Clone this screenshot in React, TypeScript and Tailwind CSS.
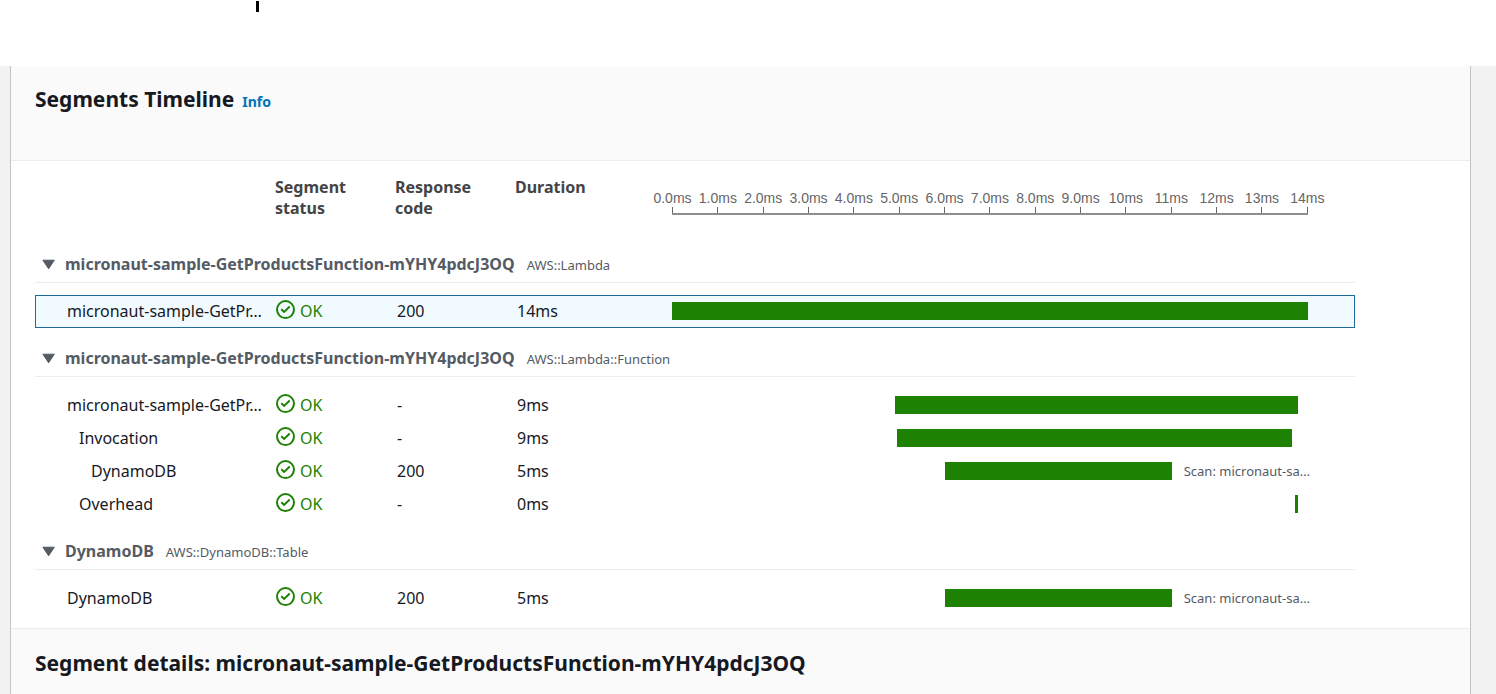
import { useState } from "react";

type Segment = {
  name: string;
  depth: number;
  code: string;
  duration: string;
  start: number;
  length: number;
  note?: string;
};

type Group = { name: string; origin: string; segments: Segment[] };

const TOTAL_MS = 14;

const TICKS = [
  "0.0ms", "1.0ms", "2.0ms", "3.0ms", "4.0ms", "5.0ms", "6.0ms", "7.0ms",
  "8.0ms", "9.0ms", "10ms", "11ms", "12ms", "13ms", "14ms",
];

const FUNCTION_NAME = "micronaut-sample-GetProductsFunction-mYHY4pdcJ3OQ";

const GROUPS: Group[] = [
  {
    name: FUNCTION_NAME,
    origin: "AWS::Lambda",
    segments: [
      { name: "micronaut-sample-GetPr…", depth: 0, code: "200", duration: "14ms", start: 0, length: 14 },
    ],
  },
  {
    name: FUNCTION_NAME,
    origin: "AWS::Lambda::Function",
    segments: [
      { name: "micronaut-sample-GetPr…", depth: 0, code: "-", duration: "9ms", start: 4.91, length: 8.88 },
      { name: "Invocation", depth: 1, code: "-", duration: "9ms", start: 4.95, length: 8.7 },
      { name: "DynamoDB", depth: 2, code: "200", duration: "5ms", start: 6, length: 5, note: "Scan: micronaut-sa…" },
      { name: "Overhead", depth: 1, code: "-", duration: "0ms", start: 13.71, length: 0.06 },
    ],
  },
  {
    name: "DynamoDB",
    origin: "AWS::DynamoDB::Table",
    segments: [
      { name: "DynamoDB", depth: 0, code: "200", duration: "5ms", start: 6, length: 5, note: "Scan: micronaut-sa…" },
    ],
  },
];

const INDENT = ["pl-8", "pl-11", "pl-14"];

const percent = (ms: number) => `${(ms / TOTAL_MS) * 100}%`;

function OkIcon() {
  return (
    <svg viewBox="0 0 20 20" className="mb-1 size-5 shrink-0" fill="none" stroke="currentColor" strokeWidth="2" aria-hidden="true">
      <circle cx="10.5" cy="9.6" r="8.5" />
      <path d="M6.3 9.2 9.1 11.9 14.7 6.6" />
    </svg>
  );
}

function Caret({ open }: { open: boolean }) {
  return (
    <svg
      viewBox="0 0 14 12"
      className={open ? "h-3 w-3.5 shrink-0" : "h-3 w-3.5 shrink-0 -rotate-90"}
      fill="currentColor"
      stroke="currentColor"
      strokeWidth="1"
      strokeLinejoin="round"
      aria-hidden="true"
    >
      <path d="M1.9 1.2H13.3L7.6 9.8Z" />
    </svg>
  );
}

function Axis() {
  return (
    <div className="pr-[47px] pl-[37px] font-['Liberation_Sans',sans-serif] text-sm font-normal text-[#666]">
      <div className="flex justify-between pt-3">
        {TICKS.map((tick) => (
          <div key={tick} className="flex w-px flex-col items-center">
            <span className="leading-[18px] whitespace-nowrap">{tick}</span>
            <span className="h-1.5 w-px bg-[#666]" />
          </div>
        ))}
      </div>
      <div className="h-0.5 bg-[#8e8e8e]" />
    </div>
  );
}

function SegmentRow({ segment, selected, onSelect }: { segment: Segment; selected: boolean; onSelect: () => void }) {
  return (
    <tr
      onClick={onSelect}
      className={
        selected
          ? "h-[33px] cursor-pointer bg-[#f1faff] outline -outline-offset-1 outline-[#1f6a99]"
          : "h-[33px] cursor-pointer"
      }
    >
      <td className={`${INDENT[segment.depth]} p-0 whitespace-nowrap`}>{segment.name}</td>
      <td className="p-0 text-[#1d8102]">
        <span className="flex items-center gap-[5px]">
          <OkIcon />
          OK
        </span>
      </td>
      <td className="p-0 pl-0.5">{segment.code}</td>
      <td className="p-0 pl-0.5">{segment.duration}</td>
      <td className="p-0 pr-[47px] pl-[37px]">
        <div className="flex items-center pb-0.5">
          <div
            className="h-[18px] min-w-0.5 shrink-0 bg-[#1d8102]"
            style={{ marginLeft: percent(segment.start), width: percent(segment.length) }}
          />
          {segment.note && (
            <span className="ml-3 text-[13px] leading-[18px] whitespace-nowrap text-[#545b64]">{segment.note}</span>
          )}
        </div>
      </td>
    </tr>
  );
}

export default function App() {
  const [selected, setSelected] = useState("0-0");
  const [closed, setClosed] = useState<number[]>([]);

  const toggle = (index: number) =>
    setClosed((list) => (list.includes(index) ? list.filter((i) => i !== index) : [...list, index]));

  return (
    <div className="flex min-h-screen flex-col bg-[#f2f2f2] font-['Noto_Sans',sans-serif] text-base leading-[21px] text-[#16191f]">
      <div className="h-[66px] bg-white pt-px pl-64">
        <div className="h-[11px] w-[3px] bg-black" />
      </div>

      <main className="mr-[25px] ml-2.5 flex grow flex-col border-x border-[#c4c4c4] bg-white">
        <header className="flex h-[95px] items-baseline gap-2 border-b border-[#eaeded] bg-[#fafafa] px-6 pt-[19px]">
          <h2 className="text-[21px] leading-7 font-bold">Segments Timeline</h2>
          <a href="#info" className="text-sm leading-7 font-bold text-[#0073bb]">Info</a>
        </header>

        <div className="pr-[115px] pb-[13px] pl-6">
          <table className="w-full table-fixed border-collapse text-left">
            <colgroup>
              <col className="w-60" />
              <col className="w-30" />
              <col className="w-30" />
              <col className="w-30" />
              <col />
            </colgroup>
            <thead>
              <tr className="h-[73px] align-top text-[#444]">
                <th className="p-0" aria-label="Name" />
                <th className="p-0 pt-4 pr-8">Segment status</th>
                <th className="p-0 pt-4 pr-8">Response code</th>
                <th className="p-0 pt-4">Duration</th>
                <th className="p-0 pt-4"><Axis /></th>
              </tr>
            </thead>
            {GROUPS.map((group, g) => (
              <tbody key={group.origin}>
                <tr>
                  <th colSpan={5} className="p-0 pb-3">
                    <div className="flex h-[49px] items-end border-b border-[#eaeded] pb-1.5">
                      <button
                        type="button"
                        aria-expanded={!closed.includes(g)}
                        onClick={() => toggle(g)}
                        className="flex items-center pl-1.5 text-[#545b64]"
                      >
                        <Caret open={!closed.includes(g)} />
                        <span className="ml-2.5 flex items-baseline gap-3">
                          <span className="font-bold">{group.name}</span>
                          <span className="text-[13px] font-normal">{group.origin}</span>
                        </span>
                      </button>
                    </div>
                  </th>
                </tr>
                {!closed.includes(g) &&
                  group.segments.map((segment, s) => (
                    <SegmentRow
                      key={s}
                      segment={segment}
                      selected={selected === `${g}-${s}`}
                      onSelect={() => setSelected(`${g}-${s}`)}
                    />
                  ))}
              </tbody>
            ))}
          </table>
        </div>

        <section className="grow border-t border-[#eaeded] bg-[#fafafa] px-6 pt-5">
          <h2 className="text-[21px] leading-7 font-bold">Segment details: {FUNCTION_NAME}</h2>
        </section>
      </main>
    </div>
  );
}
